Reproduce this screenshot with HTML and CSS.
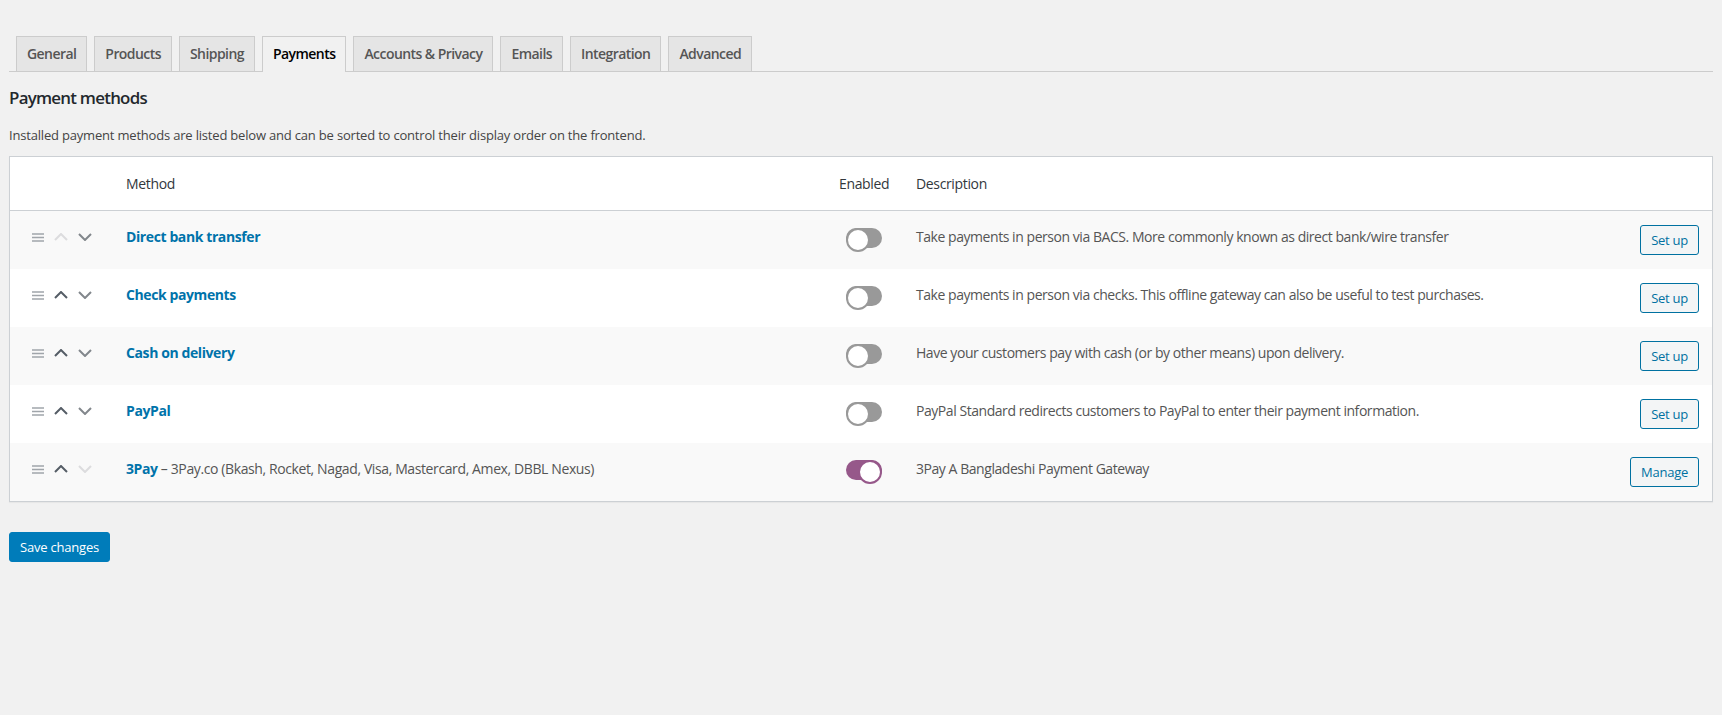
FILE: index.html
```html
<!DOCTYPE html>
<html lang="en">
<head>
<meta charset="utf-8">
<title>Payments ‹ Settings</title>
<link rel="stylesheet" href="styles.css">
</head>
<body>
<div class="wrap">
  <nav class="nav-tabs">
    <a class="nav-tab" href="#">General</a>
    <a class="nav-tab" href="#">Products</a>
    <a class="nav-tab" href="#">Shipping</a>
    <a class="nav-tab nav-tab-active" href="#">Payments</a>
    <a class="nav-tab" href="#">Accounts &amp; Privacy</a>
    <a class="nav-tab" href="#">Emails</a>
    <a class="nav-tab" href="#">Integration</a>
    <a class="nav-tab" href="#">Advanced</a>
  </nav>

  <h2 class="section-title">Payment methods</h2>
  <p class="section-desc">Installed payment methods are listed below and can be sorted to control their display order on the frontend.</p>

  <table class="gateways">
    <colgroup>
      <col class="c-sort"><col class="c-name"><col class="c-status"><col class="c-desc"><col class="c-action">
    </colgroup>
    <thead>
      <tr>
        <th class="sort"></th>
        <th class="name">Method</th>
        <th class="status">Enabled</th>
        <th class="desc">Description</th>
        <th class="action"></th>
      </tr>
    </thead>
    <tbody>
      <tr class="alt">
        <td class="sort">
          <div class="reorder">
            <svg class="grip" width="12" height="9" viewBox="0 0 12 9"><path d="M0 1h12M0 4.5h12M0 8h12" /></svg>
            <svg class="chev up off" width="14" height="8" viewBox="0 0 14 8"><path d="M1 7L7 1L13 7" /></svg>
            <svg class="chev down" width="14" height="8" viewBox="0 0 14 8"><path d="M1 1L7 7L13 1" /></svg>
          </div>
        </td>
        <td class="name"><a href="#">Direct bank transfer</a></td>
        <td class="status"><span class="toggle"></span></td>
        <td class="desc">Take payments in person via BACS. More commonly known as direct bank/wire transfer</td>
        <td class="action"><a class="btn" href="#">Set up</a></td>
      </tr>
      <tr>
        <td class="sort">
          <div class="reorder">
            <svg class="grip" width="12" height="9" viewBox="0 0 12 9"><path d="M0 1h12M0 4.5h12M0 8h12" /></svg>
            <svg class="chev up" width="14" height="8" viewBox="0 0 14 8"><path d="M1 7L7 1L13 7" /></svg>
            <svg class="chev down" width="14" height="8" viewBox="0 0 14 8"><path d="M1 1L7 7L13 1" /></svg>
          </div>
        </td>
        <td class="name"><a href="#">Check payments</a></td>
        <td class="status"><span class="toggle"></span></td>
        <td class="desc">Take payments in person via checks. This offline gateway can also be useful to test purchases.</td>
        <td class="action"><a class="btn" href="#">Set up</a></td>
      </tr>
      <tr class="alt">
        <td class="sort">
          <div class="reorder">
            <svg class="grip" width="12" height="9" viewBox="0 0 12 9"><path d="M0 1h12M0 4.5h12M0 8h12" /></svg>
            <svg class="chev up" width="14" height="8" viewBox="0 0 14 8"><path d="M1 7L7 1L13 7" /></svg>
            <svg class="chev down" width="14" height="8" viewBox="0 0 14 8"><path d="M1 1L7 7L13 1" /></svg>
          </div>
        </td>
        <td class="name"><a href="#">Cash on delivery</a></td>
        <td class="status"><span class="toggle"></span></td>
        <td class="desc">Have your customers pay with cash (or by other means) upon delivery.</td>
        <td class="action"><a class="btn" href="#">Set up</a></td>
      </tr>
      <tr>
        <td class="sort">
          <div class="reorder">
            <svg class="grip" width="12" height="9" viewBox="0 0 12 9"><path d="M0 1h12M0 4.5h12M0 8h12" /></svg>
            <svg class="chev up" width="14" height="8" viewBox="0 0 14 8"><path d="M1 7L7 1L13 7" /></svg>
            <svg class="chev down" width="14" height="8" viewBox="0 0 14 8"><path d="M1 1L7 7L13 1" /></svg>
          </div>
        </td>
        <td class="name"><a href="#">PayPal</a></td>
        <td class="status"><span class="toggle"></span></td>
        <td class="desc">PayPal Standard redirects customers to PayPal to enter their payment information.</td>
        <td class="action"><a class="btn" href="#">Set up</a></td>
      </tr>
      <tr class="alt">
        <td class="sort">
          <div class="reorder">
            <svg class="grip" width="12" height="9" viewBox="0 0 12 9"><path d="M0 1h12M0 4.5h12M0 8h12" /></svg>
            <svg class="chev up" width="14" height="8" viewBox="0 0 14 8"><path d="M1 7L7 1L13 7" /></svg>
            <svg class="chev down off" width="14" height="8" viewBox="0 0 14 8"><path d="M1 1L7 7L13 1" /></svg>
          </div>
        </td>
        <td class="name"><a href="#">3Pay</a><span class="extra"> – 3Pay.co (Bkash, Rocket, Nagad, Visa, Mastercard, Amex, DBBL Nexus)</span></td>
        <td class="status"><span class="toggle on"></span></td>
        <td class="desc">3Pay A Bangladeshi Payment Gateway</td>
        <td class="action"><a class="btn" href="#">Manage</a></td>
      </tr>
    </tbody>
  </table>

  <button class="btn-primary" type="button">Save changes</button>
</div>
</body>
</html>
```

FILE: styles.css
```css
* { box-sizing: border-box; }

html, body {
  margin: 0;
  background: #f1f1f1;
}

body {
  font-family: "Open Sans", "Noto Sans", "Liberation Sans", sans-serif;
  font-size: 13px;
  color: #444;
  letter-spacing: -0.19px;
}

.wrap {
  padding: 36px 9px 0;
}

/* Tabs */
.nav-tabs {
  display: flex;
  border-bottom: 1px solid #ccc;
  height: 36px;
}

.nav-tab {
  margin-left: 7px;
  padding: 5px 10px;
  height: 35px;
  font-size: 14px;
  line-height: 24px;
  font-weight: 600;
  letter-spacing: -0.56px;
  color: #555;
  background: #e5e5e5;
  border: 1px solid #ccc;
  border-bottom: none;
  text-decoration: none;
  white-space: nowrap;
}

.nav-tab-active {
  background: #f1f1f1;
  color: #000;
  height: 36px;
  position: relative;
  z-index: 1;
}

/* Heading */
.section-title {
  margin: 14px 0 0;
  font-size: 16.9px;
  line-height: 24px;
  font-weight: 600;
  letter-spacing: -0.75px;
  color: #23282d;
}

.section-desc {
  margin: 15px 0 11px;
  line-height: 20px;
  color: #444;
}

/* Table */
.gateways {
  width: 100%;
  table-layout: fixed;
  border-collapse: separate;
  border-spacing: 0;
  background: #fff;
  border: 1px solid #ccd0d4;
  box-shadow: 0 1px 1px rgba(0, 0, 0, 0.04);
  font-size: 14px;
  letter-spacing: -0.45px;
}

.c-sort { width: 106px; }
.c-name { width: 713px; }
.c-status { width: 77px; }
.c-action { width: 120px; }

.gateways th {
  padding: 16px 10px;
  line-height: 21px;
  text-align: left;
  font-weight: 400;
  letter-spacing: -0.35px;
  color: #32373c;
  border-bottom: 1px solid #ccd0d4;
}

.gateways td {
  padding: 14px 10px;
  line-height: 24px;
  vertical-align: top;
  color: #555;
}

.gateways tr.alt td {
  background: #f9f9f9;
}

.gateways td.sort {
  padding-left: 22px;
}

.reorder {
  display: flex;
  align-items: center;
  height: 24px;
}

.grip {
  fill: none;
  stroke: #a0a5aa;
  stroke-width: 1.4;
  margin-right: 10px;
}

.chev {
  fill: none;
  stroke-width: 2;
}

.chev.up {
  stroke: #555d66;
  margin-right: 10px;
}

.chev.down {
  stroke: #82878c;
}

.chev.off {
  stroke: #dcdcde;
}

.gateways td.name a {
  color: #0073aa;
  font-weight: 700;
  letter-spacing: -0.4px;
  text-decoration: none;
}

.gateways td.name .extra {
  color: #555;
  letter-spacing: -0.39px;
}

.gateways td.status {
  padding-left: 17px;
}

.toggle {
  display: inline-block;
  position: relative;
  width: 36px;
  height: 20px;
  border-radius: 10px;
  background: #999;
  vertical-align: middle;
}

.toggle::before {
  content: "";
  position: absolute;
  top: 0;
  left: 0;
  width: 20px;
  height: 20px;
  border-radius: 50%;
  background: #fff;
  border: 2px solid #999;
}

.toggle.on {
  background: #96588a;
}

.toggle.on::before {
  left: auto;
  right: 0;
  border-color: #96588a;
}

.gateways td.action {
  text-align: right;
  padding-right: 13px;
}

.btn {
  display: inline-block;
  height: 30px;
  padding: 0 10px;
  line-height: 28px;
  font-size: 13px;
  letter-spacing: -0.25px;
  color: #0071a1;
  background: #f3f5f6;
  border: 1px solid #0071a1;
  border-radius: 3px;
  text-decoration: none;
  white-space: nowrap;
}

.btn-primary {
  margin-top: 30px;
  height: 30px;
  padding: 0 10px;
  font-family: inherit;
  font-size: 13px;
  letter-spacing: -0.2px;
  line-height: 28px;
  color: #fff;
  background: #007cba;
  border: 1px solid #007cba;
  border-radius: 3px;
}
```
